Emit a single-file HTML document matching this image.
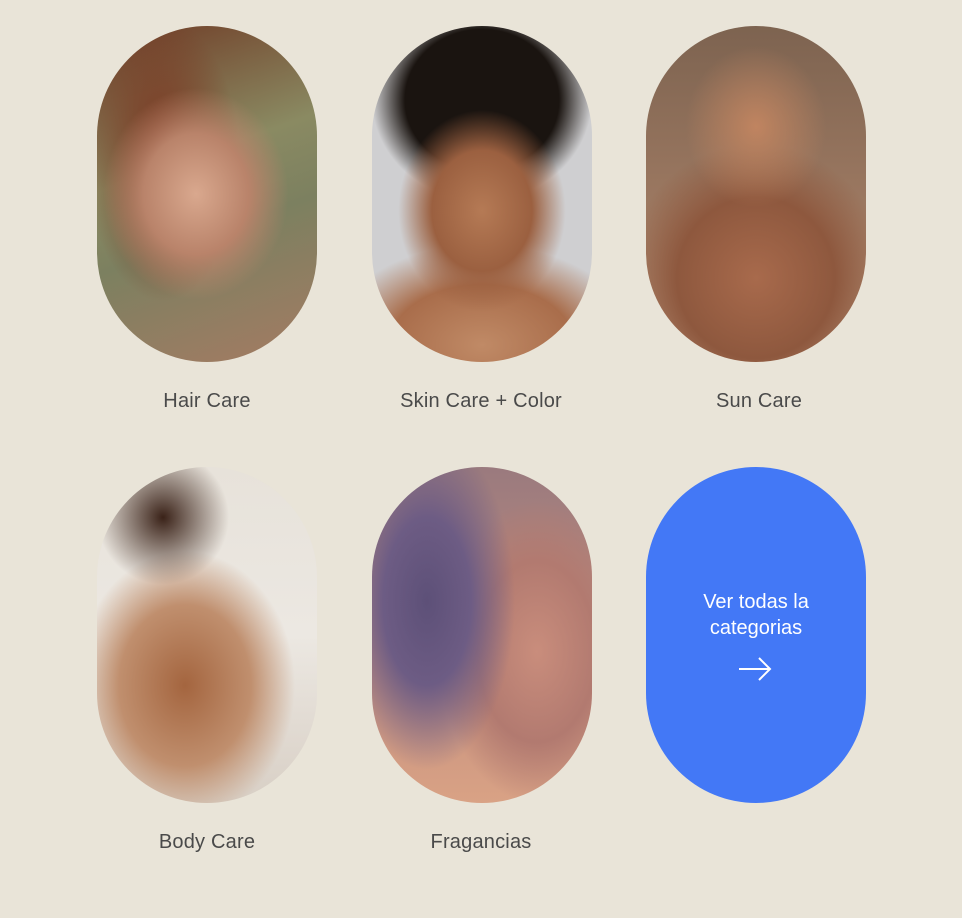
<!DOCTYPE html>
<html><head><meta charset="utf-8"><style>
html,body{margin:0;padding:0;width:962px;height:918px;background:#e9e4d8;overflow:hidden;font-family:"Liberation Sans",sans-serif}
.p{position:absolute;width:220px;height:336px;border-radius:110px;overflow:hidden}
.l{position:absolute;width:276px;text-align:center;font-size:20px;color:#4a4a4a;letter-spacing:0.2px}
</style></head><body>
<div class="p" style="left:97px;top:26px;background:radial-gradient(ellipse 60% 45% at 45% 50%,#d9a88e 0%,#b9836a 40%,transparent 70%),radial-gradient(ellipse 50% 60% at 30% 40%,#7a2e1a 0%,transparent 70%),linear-gradient(160deg,#6f3a25 0%,#8a8a62 40%,#7c8060 60%,#a57b63 100%)"></div>
<div class="p" style="left:372px;top:26px;background:radial-gradient(ellipse 38% 30% at 50% 55%,#b57a55 0%,#9b6040 60%,transparent 100%),radial-gradient(ellipse 50% 30% at 50% 22%,#1a1410 0%,#1a1410 70%,transparent 100%),radial-gradient(ellipse 70% 30% at 50% 95%,#c08a66 0%,#a96d4b 60%,transparent 100%),#cfcfd1"></div>
<div class="p" style="left:646px;top:26px;background:radial-gradient(ellipse 40% 30% at 50% 30%,#c08460 0%,transparent 80%),radial-gradient(ellipse 60% 40% at 50% 75%,#a86a4c 0%,#8e583e 60%,transparent 100%),linear-gradient(180deg,#7d6350 0%,#9a7760 50%,#b89075 100%)"></div>
<div class="l" style="left:69px;top:390px">Hair Care</div>
<div class="l" style="left:343px;top:390px">Skin Care + Color</div>
<div class="l" style="left:621px;top:390px">Sun Care</div>
<div class="p" style="left:97px;top:467px;background:radial-gradient(ellipse 30% 20% at 30% 15%,#3a2218 0%,transparent 100%),radial-gradient(ellipse 50% 40% at 40% 65%,#a4653f 0%,#c08f6e 60%,transparent 100%),linear-gradient(180deg,#e7e2da 0%,#ece8e2 50%,#d8cfc5 100%)"></div>
<div class="p" style="left:372px;top:467px;background:radial-gradient(ellipse 40% 50% at 25% 40%,#5d5078 0%,#6d5c84 50%,transparent 100%),radial-gradient(ellipse 45% 45% at 75% 55%,#c98d7c 0%,#b27a70 60%,transparent 100%),linear-gradient(180deg,#9a7a7e 0%,#c48f7e 60%,#d9a285 100%)"></div>
<div class="p" style="left:646px;top:467px;background:#4378f6"></div>
<div style="position:absolute;left:646px;top:589px;width:220px;text-align:center;color:#fff;font-size:20px;line-height:26px">Ver todas la<br>categorias</div>
<svg style="position:absolute;left:738px;top:656px" width="34" height="26" viewBox="0 0 34 26"><path d="M1 13H32M21 2L32 13L21 24" stroke="#fff" stroke-width="2" fill="none"/></svg>
<div class="l" style="left:69px;top:831px">Body Care</div>
<div class="l" style="left:343px;top:831px">Fragancias</div>
</body></html>
